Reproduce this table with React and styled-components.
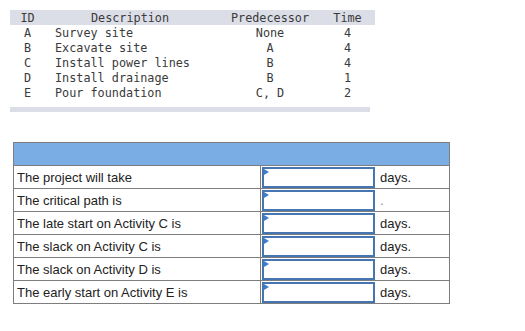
import React from 'react';
import styled, { createGlobalStyle } from 'styled-components';

const GlobalStyle = createGlobalStyle`
  body {
    margin: 0;
    background: #ffffff;
  }
`;

const Page = styled.div`
  width: 525px;
  height: 331px;
  padding: 10px 0 0 10px;
  box-sizing: border-box;
`;

// activity list, printed in a code-like font
const ActivityTable = styled.table`
  width: 360px;
  border-collapse: collapse;
  font-family: 'DejaVu Sans Mono', 'Liberation Mono', monospace;
  font-size: 11.8px;
  color: #3a3a3a;
  table-layout: fixed;
`;

const HeadRow = styled.tr`
  background: #dcdee7;
  height: 15px;
`;

const Th = styled.th`
  font-weight: normal;
  padding: 1px ${p => p.$pr || 0}px 0 0;
  line-height: 14px;
  text-align: center;
  width: ${p => p.$w}px;
`;

const Td = styled.td`
  padding: 1px ${p => p.$pr || 0}px 0 ${p => (p.$left ? 10 : 0)}px;
  line-height: 14px;
  height: 14px;
  text-align: ${p => (p.$left ? 'left' : 'center')};
  white-space: pre;
`;

const FootBand = styled.div`
  width: 360px;
  height: 5px;
  margin-top: 7px;
  background: #dcdee7;
`;

// answer sheet
const Sheet = styled.div`
  margin: 30px 0 0 3px;
  width: 437px;
  border: 1px solid #7d7d7d;
  box-sizing: border-box;
  font-family: 'Liberation Sans', Arial, sans-serif;
  font-size: 13px;
  color: #222;
`;

const SheetHead = styled.div`
  height: 22px;
  background: #7aade3;
`;

const SheetRow = styled.div`
  display: grid;
  grid-template-columns: 247px 114px 1fr;
  height: 23px;
  border-top: 1px solid #7d7d7d;
  box-sizing: border-box;
`;

const Label = styled.div`
  display: flex;
  align-items: center;
  padding-left: 3px;
  border-right: 1px solid #7d7d7d;
`;

const AnswerCell = styled.div`
  padding: 1px 0 0 1px;
  box-sizing: border-box;
`;

const AnswerBox = styled.div`
  position: relative;
  height: 100%;
  border: 2px solid #4676b1;
  box-sizing: border-box;
  background: #fff;

  &::before {
    content: '';
    position: absolute;
    left: 0;
    top: 0;
    border-top: 3px solid transparent;
    border-bottom: 3px solid transparent;
    border-left: 5px solid #3d7ccf;
  }
`;

const Unit = styled.div`
  display: flex;
  align-items: center;
  padding-left: 5px;
  color: ${p => (p.$faint ? '#888' : '#222')};
`;

const activities = [
  ['A', 'Survey site', 'None', '4'],
  ['B', 'Excavate site', 'A', '4'],
  ['C', 'Install power lines', 'B', '4'],
  ['D', 'Install drainage', 'B', '1'],
  ['E', 'Pour foundation', 'C, D', '2'],
];

const questions = [
  ['The project will take', 'days.'],
  ['The critical path is', '.'],
  ['The late start on Activity C is', 'days.'],
  ['The slack on Activity C is', 'days.'],
  ['The slack on Activity D is', 'days.'],
  ['The early start on Activity E is', 'days.'],
];

export default function App() {
  return (
    <Page>
      <GlobalStyle />
      <ActivityTable>
        <thead>
          <HeadRow>
            <Th $w={35}>ID</Th>
            <Th $w={170}>Description</Th>
            <Th $w={110}>Predecessor</Th>
            <Th $w={45} $pr={5}>Time</Th>
          </HeadRow>
        </thead>
        <tbody>
          {activities.map(([id, desc, pred, time]) => (
            <tr key={id}>
              <Td>{id}</Td>
              <Td $left>{desc}</Td>
              <Td>{pred}</Td>
              <Td $pr={5}>{time}</Td>
            </tr>
          ))}
        </tbody>
      </ActivityTable>
      <FootBand />

      <Sheet>
        <SheetHead />
        {questions.map(([text, unit]) => (
          <SheetRow key={text}>
            <Label>{text}</Label>
            <AnswerCell>
              <AnswerBox />
            </AnswerCell>
            <Unit $faint={unit === '.'}>{unit}</Unit>
          </SheetRow>
        ))}
      </Sheet>
    </Page>
  );
}
